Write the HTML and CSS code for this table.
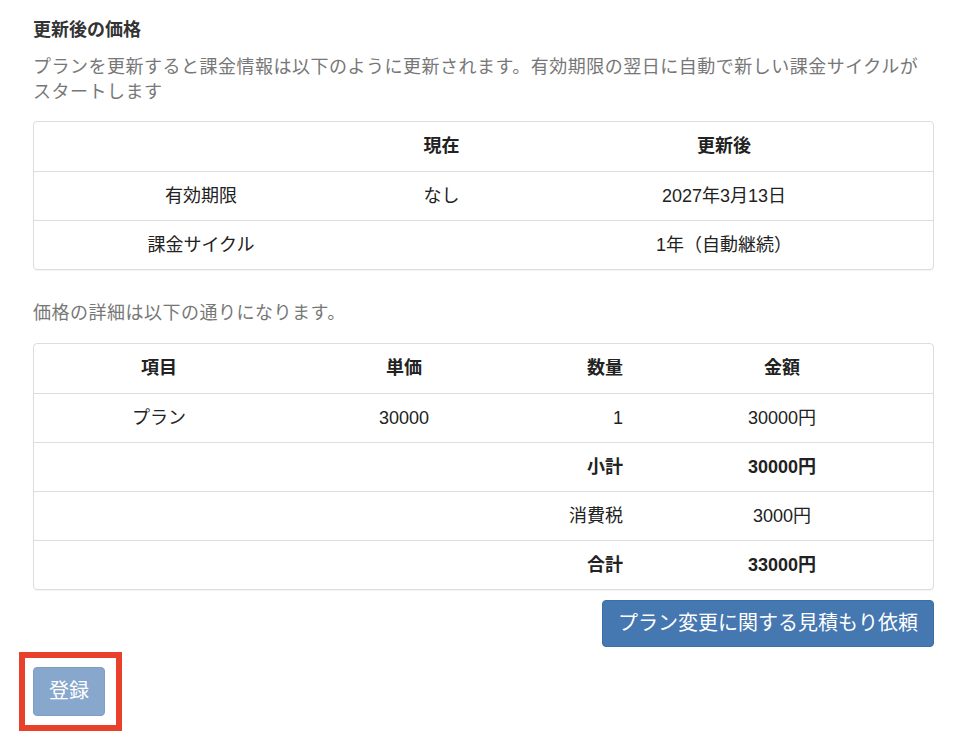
FILE: index.html
```html
<!DOCTYPE html>
<html lang="ja">
<head>
  <meta charset="UTF-8">
  <title>更新後の価格</title>
  <link rel="stylesheet" href="styles.css">
</head>
<body>
  <div class="page">
    <h3 class="section-title">更新後の価格</h3>
    <p class="help-text">プランを更新すると課金情報は以下のように更新されます。有効期限の翌日に自動で新しい課金サイクルがスタートします</p>

    <div class="table-box">
      <table class="info-table">
        <colgroup><col class="c-label"><col class="c-now"><col></colgroup>
        <thead><tr><th></th><th>現在</th><th>更新後</th></tr></thead>
        <tbody>
          <tr><td>有効期限</td><td>なし</td><td>2027年3月13日</td></tr>
          <tr><td>課金サイクル</td><td></td><td>1年（自動継続）</td></tr>
        </tbody>
      </table>
    </div>

    <p class="help-text detail-note">価格の詳細は以下の通りになります。</p>

    <div class="table-box">
      <table class="price-table">
        <colgroup><col class="c-item"><col class="c-unit"><col class="c-qty"><col></colgroup>
        <thead><tr><th>項目</th><th>単価</th><th class="num">数量</th><th>金額</th></tr></thead>
        <tbody>
          <tr><td>プラン</td><td>30000</td><td class="num">1</td><td>30000円</td></tr>
          <tr class="strong"><td></td><td></td><td class="num">小計</td><td>30000円</td></tr>
          <tr><td></td><td></td><td class="num">消費税</td><td>3000円</td></tr>
          <tr class="strong"><td></td><td></td><td class="num">合計</td><td>33000円</td></tr>
        </tbody>
      </table>
    </div>

    <div class="actions">
      <button class="btn btn-primary">プラン変更に関する見積もり依頼</button>
    </div>

    <div class="highlight">
      <button class="btn btn-primary" disabled>登録</button>
    </div>
  </div>
</body>
</html>
```

FILE: styles.css
```css
body {
  margin: 0;
  background: #fff;
  color: #333;
  font-family: "Liberation Sans", "Noto Sans CJK JP", sans-serif;
  font-size: 18px;
  line-height: 25px;
}
.page {
  padding: 18px 26px 0 33px;
}
.section-title {
  margin: 0 0 12px;
  font-size: 18px;
  font-weight: bold;
  line-height: 25px;
  color: #333;
}
.help-text {
  margin: 0 0 16px;
  color: #777;
  letter-spacing: 0.5px;
}
.detail-note {
  margin-top: 31px;
  margin-bottom: 17px;
}
.table-box {
  border: 1px solid #ddd;
  border-radius: 4px;
  overflow: hidden;
  box-shadow: 0 1px 1px rgba(0, 0, 0, 0.05);
}
table {
  width: 100%;
  border-collapse: collapse;
  table-layout: fixed;
}
th, td {
  padding: 12px 8px;
  line-height: 24px;
  text-align: center;
  color: #222;
}
th {
  font-weight: bold;
  padding-bottom: 13px;
}
tbody tr td {
  border-top: 1px solid #ddd;
}
.c-label { width: 334px; }
.c-now { width: 147px; }
.c-item { width: 250px; }
.c-unit { width: 240px; }
.c-qty { width: 107px; }
.num {
  text-align: right;
}
.strong td {
  font-weight: bold;
}
.actions {
  display: flex;
  justify-content: flex-end;
  margin-top: 10px;
}
.btn {
  font-family: "Liberation Sans", "Noto Sans CJK JP", sans-serif;
  font-size: 20px;
  line-height: 27px;
  color: #fff;
  border: 1px solid #3b6ea5;
  border-radius: 4px;
  cursor: pointer;
}
.btn-primary {
  background: #4577b1;
  padding: 9px 15px;
}
.btn-primary:disabled {
  background: #87a7cd;
  border-color: #7d9fc7;
  padding: 10px 15px;
  cursor: default;
}
/* annotation box round the submit button */
.highlight {
  display: inline-block;
  margin: 5px 0 0 -14px;
  padding: 9px 11px 9px 8px;
  border: 6px solid #e8402a;
}
.highlight .btn {
  display: block;
}
```
